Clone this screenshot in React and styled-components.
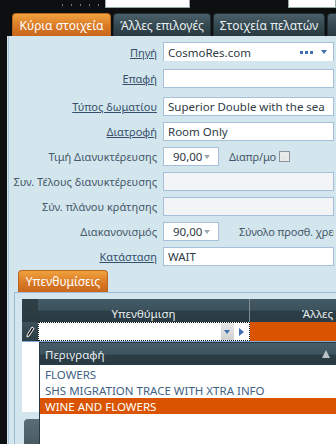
import React from "react";
import styled, { createGlobalStyle, css } from "styled-components";

const Global = createGlobalStyle`
  html, body { margin: 0; padding: 0; background: #0e0f10; }
  body { font-family: "Noto Sans", "DejaVu Sans", sans-serif; font-size: 11px; }
  * { box-sizing: border-box; }
`;

const Screen = styled.div`
  position: relative;
  width: 336px;
  height: 444px;
  overflow: hidden;
  background: #0e0f10;
  font-family: "Noto Sans", "DejaVu Sans", sans-serif;
  font-size: 11px;
`;

const TopStrip = styled.div`
  height: 13px;
  display: flex;
  align-items: flex-start;
  padding-left: 62px;
`;

const Dots = styled.div`
  width: ${(p) => p.$w}px;
  margin-top: 4px;
  height: 2px;
  background: repeating-linear-gradient(90deg, #777 0 1px, transparent 1px 9px);
`;

const CutInput = styled.div`
  width: ${(p) => p.$w}px;
  height: 8px;
  margin-left: ${(p) => p.$ml}px;
  background: #fff;
  border: 1px solid #9aa;
  border-top: none;
`;

const Body = styled.div`
  margin-left: 7px;
`;

const TabBar = styled.div`
  display: flex;
  gap: 2px;
  height: 23px;
  padding-left: ${(p) => p.$pl || 0}px;
  align-items: flex-end;
`;

const Tab = styled.div`
  flex: 0 0 ${(p) => p.$w}px;
  height: ${(p) => p.$h || 23}px;
  border-radius: 4px 4px 0 0;
  display: flex;
  align-items: center;
  justify-content: center;
  color: #f4f4f4;
  font-size: 12px;
  white-space: nowrap;
  overflow: hidden;
  ${(p) =>
    p.$active
      ? css`
          background: linear-gradient(#f1a23e, #d97a26 55%, #c9661c);
          border: 1px solid #b8651f;
          border-bottom: none;
          color: #fff;
        `
      : css`
          background: linear-gradient(#4a606a, #34474f 55%, #2a3a41);
          border: 1px solid #222d33;
          border-bottom: none;
          color: #eaf0f2;
        `}
`;

const Panel = styled.div`
  background: #d3e6ed;
  box-shadow: inset 1px 0 #d3e6ed, inset 2px 0 #a9c5da;
  height: 421px;
  padding-top: 6px;
`;

const Form = styled.div`
  display: flex;
  flex-direction: column;
  gap: 6px;
  padding-right: 2px;
`;

const Row = styled.div`
  display: grid;
  grid-template-columns: 150px 1fr;
  column-gap: 6px;
  align-items: center;
  height: 19px;
  overflow: hidden;
  margin-bottom: ${(p) => p.$extra || 0}px;
`;

const Label = styled.span`
  text-align: right;
  color: #46576a;
  font-size: 11px;
  white-space: nowrap;
  ${(p) =>
    p.$link &&
    css`
      text-decoration: underline;
      color: #36506c;
    `}
`;

const Field = styled.div`
  height: ${(p) => p.$h || 19}px;
  border: 1px solid #a7c0d9;
  background: ${(p) => (p.$disabled ? "#f3f4f6" : "#fff")};
  display: flex;
  align-items: center;
  padding: 0 4px;
  color: #2e3a44;
  font-size: 11.5px;
  white-space: nowrap;
  overflow: hidden;
`;

const FieldText = styled.span`
  flex: 1;
`;

const EllipsisBtn = styled.span`
  display: flex;
  gap: 2px;
  margin-right: 8px;
  & > i {
    width: 3px;
    height: 3px;
    background: #3f6fb0;
    display: block;
  }
`;

const DownTri = styled.span`
  width: 0;
  height: 0;
  border-left: 3.5px solid transparent;
  border-right: 3.5px solid transparent;
  border-top: 4px solid ${(p) => p.$c || "#3f6fb0"};
  margin-right: 2px;
`;

const Inline = styled.div`
  display: flex;
  align-items: center;
  gap: ${(p) => p.$gap || 10}px;
  white-space: nowrap;
  overflow: hidden;
`;

const Combo = styled(Field)`
  flex: 0 0 56px;
  width: 56px;
  padding: 0 6px 0 9px;
  justify-content: space-between;
`;

const SideText = styled.span`
  color: #46576a;
  font-size: 11px;
  letter-spacing: -0.2px;
  white-space: nowrap;
`;

const Check = styled.span`
  flex: 0 0 11px;
  width: 11px;
  height: 11px;
  border: 1px solid #8d9498;
  background: linear-gradient(#f4f4f4, #dadcdd);
  box-shadow: inset 0 0 0 2px #e9eaea;
  margin-left: -7px;
`;

const SubTabBar = styled(TabBar)`
  margin-top: 4px;
  height: 22px;
  padding-left: 11px;
`;

const Frame = styled.div`
  margin-left: 7px;
  border-left: 1px solid #9dbad8;
  border-top: 1px solid #9dbad8;
  padding: 6px 0 0 7px;
  height: 200px;
`;

const GridHead = styled.div`
  display: grid;
  grid-template-columns: 16px 211px 1px 1fr;
  height: 23px;
  background: linear-gradient(#435a65 0, #3c525d 48%, #2d3e46 52%, #2b3b43 100%);
  color: #e6eef1;
  font-size: 11.5px;
`;

const HeadCell = styled.div`
  display: flex;
  align-items: center;
  justify-content: ${(p) => p.$align || "center"};
  white-space: nowrap;
  overflow: hidden;
  padding-top: 6px;
  ${(p) =>
    p.$dark &&
    css`
      background: linear-gradient(#2f3f46, #2b3a41);
    `}
`;

const Sep = styled.div`
  background: #7f8d93;
`;

const GridRow = styled.div`
  display: grid;
  grid-template-columns: 16px 212px 1fr;
  height: 20px;
  border-bottom: 1px solid #7fa6da;
`;

const Indicator = styled.div`
  background: linear-gradient(#3c515b, #2c3c44);
  display: flex;
  align-items: center;
  justify-content: center;
`;

const Editor = styled.div`
  background: #fff;
  border: 1px dotted #111;
  display: flex;
  align-items: center;
  justify-content: flex-end;
  padding-right: 5px;
  gap: 5px;
`;

const DropBtn = styled.div`
  width: 13px;
  height: 17px;
  background: linear-gradient(#e9e9e9, #d0d0d0);
  display: flex;
  align-items: center;
  justify-content: center;
`;

const RightTri = styled.span`
  width: 0;
  height: 0;
  border-top: 4px solid transparent;
  border-bottom: 4px solid transparent;
  border-left: 5px solid #3d6fb8;
`;

const OrangeCell = styled.div`
  background: #d95300;
`;

const GridBody = styled.div`
  width: 17px;
  height: 70px;
  background: #fff;
`;

const FooterBtn = styled.div`
  margin-top: 7px;
  margin-left: 2px;
  width: 40px;
  height: 30px;
  border-radius: 4px;
  background: linear-gradient(#5b6e77, #45565e);
`;

const Popup = styled.div`
  position: absolute;
  left: 39px;
  top: 342px;
  right: 0;
  bottom: 0;
  background: #fff;
  border-left: 1px solid #2b3a42;
  border-top: 1px solid #2b3a42;
`;

const PopHead = styled.div`
  height: 22px;
  display: flex;
  align-items: center;
  justify-content: space-between;
  padding: 0 6px 0 5px;
  color: #e6eef1;
  font-size: 11.5px;
  background: linear-gradient(#465d68 0, #3e5460 50%, #2c3d45 55%, #2a3a42 100%);
`;

const UpTri = styled.span`
  width: 0;
  height: 0;
  border-left: 4px solid transparent;
  border-right: 4px solid transparent;
  border-bottom: 8px solid #b9c3c8;
`;

const List = styled.div`
  padding-top: 1px;
`;

const Item = styled.div`
  height: 16px;
  display: flex;
  align-items: center;
  padding-left: 5px;
  font-size: 11.5px;
  color: ${(p) => (p.$sel ? "#fff" : "#3f6283")};
  background: ${(p) => (p.$sel ? "#d95300" : "transparent")};
  white-space: nowrap;
`;

const Pencil = () => (
  <svg width="10" height="12" viewBox="0 0 10 12">
    <path d="M7 1 L9 2.5 L4 10 L2 11 L2.3 8.6 Z" fill="#111" stroke="#fff" strokeWidth="1" />
  </svg>
);

export default function App() {
  return (
    <Screen>
      <Global />
      <TopStrip>
        <Dots $w={40} />
        <CutInput $w={86} $ml={3} />
        <CutInput $w={48} $ml={98} />
      </TopStrip>
      <Body>
        <TabBar $pl={5}>
          <Tab $w={99} $active>Κύρια στοιχεία</Tab>
          <Tab $w={98}>Άλλες επιλογές</Tab>
          <Tab $w={112}>Στοιχεία πελατών</Tab>
          <Tab $w={40} />
        </TabBar>
        <Panel>
          <Form>
            <Row $extra={2}>
              <Label $link>Πηγή</Label>
              <Field $h={20}>
                <FieldText>CosmoRes.com</FieldText>
                <EllipsisBtn><i /><i /><i /></EllipsisBtn>
                <DownTri />
              </Field>
            </Row>
            <Row $extra={3}>
              <Label $link>Επαφή</Label>
              <Field />
            </Row>
            <Row>
              <Label $link>Τύπος δωματίου</Label>
              <Field>Superior Double with the sea</Field>
            </Row>
            <Row>
              <Label $link>Διατροφή</Label>
              <Field>Room Only</Field>
            </Row>
            <Row>
              <Label>Τιμή Διανυκτέρευσης</Label>
              <Inline>
                <Combo>90,00<DownTri $c="#a0a8ae" /></Combo>
                <SideText>Διαπρ/μο</SideText>
                <Check />
              </Inline>
            </Row>
            <Row>
              <Label>Συν. Τέλους διανυκτέρευσης</Label>
              <Field $disabled />
            </Row>
            <Row>
              <Label>Σύν. πλάνου κράτησης</Label>
              <Field $disabled />
            </Row>
            <Row>
              <Label>Διακανονισμός</Label>
              <Inline $gap={20}>
                <Combo>90,00<DownTri $c="#a0a8ae" /></Combo>
                <SideText>Σύνολο προσθ. χρεώσεων</SideText>
              </Inline>
            </Row>
            <Row>
              <Label $link>Κατάσταση</Label>
              <Field>WAIT</Field>
            </Row>
          </Form>
          <SubTabBar>
            <Tab $w={90} $h={22} $active>Υπενθυμίσεις</Tab>
          </SubTabBar>
          <Frame>
            <GridHead>
              <HeadCell $dark />
              <HeadCell>Υπενθύμιση</HeadCell>
              <Sep />
              <HeadCell $align="flex-end">Άλλες&nbsp;</HeadCell>
            </GridHead>
            <GridRow>
              <Indicator><Pencil /></Indicator>
              <Editor>
                <DropBtn><DownTri /></DropBtn>
                <RightTri />
              </Editor>
              <OrangeCell />
            </GridRow>
            <GridBody />
            <FooterBtn />
          </Frame>
        </Panel>
      </Body>
      <Popup>
        <PopHead>
          <span>Περιγραφή</span>
          <UpTri />
        </PopHead>
        <List>
          <Item>FLOWERS</Item>
          <Item>SHS MIGRATION TRACE WITH XTRA INFO</Item>
          <Item $sel>WINE AND FLOWERS</Item>
        </List>
      </Popup>
    </Screen>
  );
}
